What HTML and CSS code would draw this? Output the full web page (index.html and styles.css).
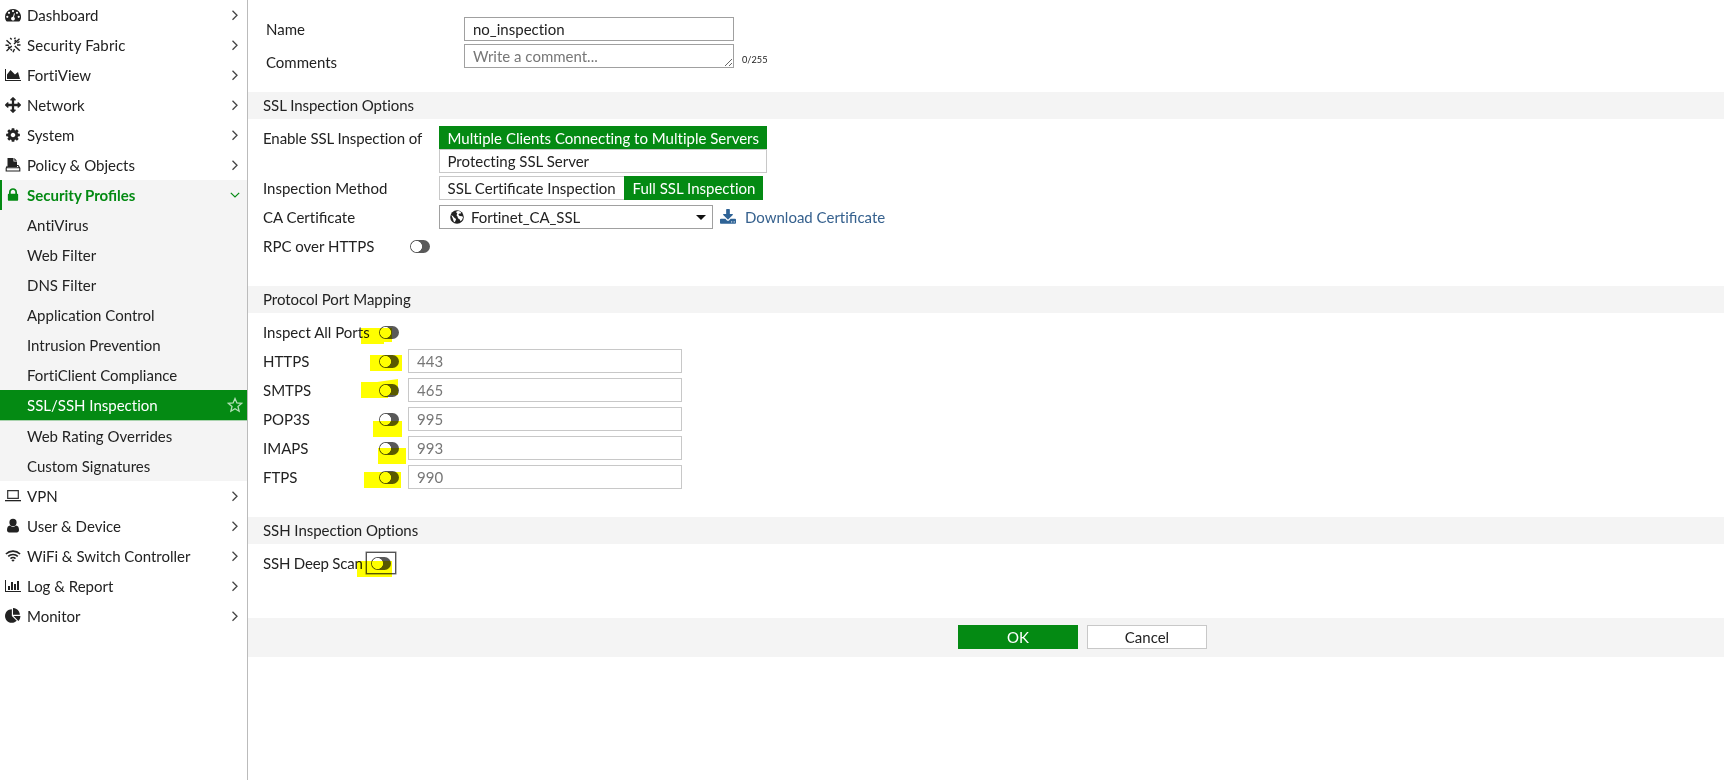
FILE: index.html
```html
<!DOCTYPE html>
<html lang="en">
<head>
<meta charset="utf-8">
<title>SSL/SSH Inspection</title>
<link rel="stylesheet" href="styles.css">
</head>
<body>
<svg class="defs" width="0" height="0">
  <symbol id="chev" viewBox="0 0 8 12"><path d="M1.500 1.700 6 6.200 1.500 10.700" fill="none" stroke="#444" stroke-width="1.300"/></symbol>
</svg>
<div class="app">
<nav class="sidebar">
  <div class="item"><svg class="ico" viewBox="0 0 16 14"><path fill-rule="evenodd" d="M8 .9a8 8 0 0 0-8 8c0 1.600.4 3 1.200 4.200.2.300.400.400.700.400h12.200c.3 0 .5-.1.700-.4A8 8 0 0 0 8 .9zM8 2a1.100 1.100 0 1 1 0 2.200A1.100 1.100 0 0 1 8 2zM4 3.700a1.100 1.100 0 1 1 0 2.200 1.100 1.100 0 0 1 0-2.200zm8 0a1.100 1.100 0 1 1 0 2.200 1.100 1.100 0 0 1 0-2.200zM2.300 7.700a1.100 1.100 0 1 1 0 2.200 1.100 1.100 0 0 1 0-2.200zm11.400 0a1.100 1.100 0 1 1 0 2.200 1.100 1.100 0 0 1 0-2.200zM9 5.200l.9.300-.9 3.600a1.900 1.900 0 1 1-1-.3z"/></svg><span>Dashboard</span><svg class="chev"><use href="#chev"/></svg></div>
  <div class="item fabric"><svg class="ico" viewBox="0 0 16 16"><g stroke="#222" stroke-width="1.400" fill="none"><path d="M1.500 3.200 5.800 7.300M9.800 9 14.800 13.700M14.500 1.800 9 7M6.800 9 1.500 14M5.200 1 6.700 2.500M9.500 4.500 11 3M12 8H15.500M.5 8.300H3.800M5.500 12 7 13.500M9.500 12 8 15.300M10.500 .6 9.300 2M12.300 5.800 14.500 4.500M3 10.800 4.500 9.500"/></g></svg><span>Security Fabric</span><svg class="chev"><use href="#chev"/></svg></div>
  <div class="item"><svg class="ico" viewBox="0 0 2048 1792"><path d="M2048 1536v128h-2048v-1536h128v1408h1920zm-384-1024l256 896h-1664v-576l448-576 576 576z"/></svg><span>FortiView</span><svg class="chev"><use href="#chev"/></svg></div>
  <div class="item"><svg class="ico" viewBox="0 0 1792 1792"><path d="M1792 896q0 26-19 45l-256 256q-19 19-45 19t-45-19-19-45v-128h-384v384h128q26 0 45 19t19 45-19 45l-256 256q-19 19-45 19t-45-19l-256-256q-19-19-19-45t19-45 45-19h128v-384h-384v128q0 26-19 45t-45 19-45-19l-256-256q-19-19-19-45t19-45l256-256q19-19 45-19t45 19 19 45v128h384v-384h-128q-26 0-45-19t-19-45 19-45l256-256q19-19 45-19t45 19l256 256q19 19 19 45t-19 45-45 19h-128v384h384v-128q0-26 19-45t45-19 45 19l256 256q19 19 19 45z"/></svg><span>Network</span><svg class="chev"><use href="#chev"/></svg></div>
  <div class="item"><svg class="ico" viewBox="0 0 1792 1792"><path d="M1152 896q0-106-75-181t-181-75-181 75-75 181 75 181 181 75 181-75 75-181zm512-109v222q0 12-8 23t-20 13l-185 28q-19 54-39 91 35 50 107 138 10 12 10 25t-9 23q-27 37-99 108t-94 71q-12 0-26-9l-138-108q-44 23-91 38-16 136-29 186-7 28-36 28h-222q-14 0-24.500-8.500t-11.500-21.500l-28-184q-49-16-90-37l-141 107q-10 9-25 9-14 0-25-11-126-114-165-168-7-10-7-23 0-12 8-23 15-21 51-66.500t54-70.500q-27-50-41-99l-183-27q-13-2-21-12.500t-8-23.500v-222q0-12 8-23t19-13l186-28q14-46 39-92-40-57-107-138-10-12-10-24 0-10 9-23 26-36 98.500-107.500t94.500-71.500q13 0 26 10l138 107q44-23 91-38 16-136 29-186 7-28 36-28h222q14 0 24.500 8.500t11.500 21.500l28 184q49 16 90 37l142-107q9-9 24-9 13 0 25 10 129 119 165 170 7 8 7 22 0 12-8 23-15 21-51 66.500t-54 70.500q26 50 41 98l183 28q13 2 21 12.500t8 23.500z"/></svg><span>System</span><svg class="chev"><use href="#chev"/></svg></div>
  <div class="item"><svg class="ico" viewBox="0 0 16 16"><path d="M2.500 1h6v3.500H12V10H2.500zM9.300 1 12 3.800H9.300z"/><path d="M2.300 9 1.200 11.200V14h13.600v-2.800L13.200 8.500H12M1.200 10.800H14.500" fill="none" stroke="#222" stroke-width="1.100"/></svg><span>Policy &amp; Objects</span><svg class="chev"><use href="#chev"/></svg></div>
  <div class="group">
    <div class="item open"><svg class="ico" viewBox="0 0 1792 1792"><path d="M640 768h512v-192q0-106-75-181t-181-75-181 75-75 181v192zm832 96v576q0 40-28 68t-68 28h-960q-40 0-68-28t-28-68v-576q0-40 28-68t68-28h32v-192q0-184 132-316t316-132 316 132 132 316v192h32q40 0 68 28t28 68z"/></svg><span>Security Profiles</span><svg class="down" viewBox="0 0 10 6"><path d="M.8.8 5 5 9.200.8" fill="none" stroke="#048a13" stroke-width="1.200"/></svg></div>
    <div class="item sub">AntiVirus</div>
    <div class="item sub">Web Filter</div>
    <div class="item sub">DNS Filter</div>
    <div class="item sub">Application Control</div>
    <div class="item sub">Intrusion Prevention</div>
    <div class="item sub">FortiClient Compliance</div>
    <div class="item sub current"><span>SSL/SSH Inspection</span><svg class="star" viewBox="0 0 16 16"><path d="M8 1.600 9.900 6l4.700.4-3.600 3.100 1.100 4.700L8 11.700l-4.100 2.500L5 9.500 1.400 6.400 6.100 6z" fill="none" stroke="#b4e0b8" stroke-width="1.300"/></svg></div>
    <div class="item sub">Web Rating Overrides</div>
    <div class="item sub">Custom Signatures</div>
  </div>
  <div class="item"><svg class="ico" viewBox="0 0 16 16"><path d="M2.700 2.700h10.600v7.600H2.700z" fill="none" stroke="#333" stroke-width="1.200"/><path d="M0 12h16v1.300H0z"/></svg><span>VPN</span><svg class="chev"><use href="#chev"/></svg></div>
  <div class="item"><svg class="ico" viewBox="0 0 16 16"><path d="M8 .8a3.600 3.600 0 1 1 0 7.200A3.600 3.600 0 0 1 8 .8zM5 7.500a4.600 4.600 0 0 0 6 0c2 .1 3 1.900 3 4.500 0 1.600-.9 2.500-2.200 2.500H4.200C2.900 14.500 2 13.600 2 12c0-2.600 1-4.400 3-4.500z"/></svg><span>User &amp; Device</span><svg class="chev"><use href="#chev"/></svg></div>
  <div class="item"><svg class="ico" viewBox="0 0 16 16"><path d="M.9 6a10.200 10.200 0 0 1 14.200 0M3.200 8.400a6.900 6.900 0 0 1 9.600 0M5.500 10.700a3.600 3.600 0 0 1 5 0" fill="none" stroke="#222" stroke-width="1.600"/><path d="M6.400 12.200a2.300 2.300 0 0 1 3.200 0L8 13.800z"/></svg><span>WiFi &amp; Switch Controller</span><svg class="chev"><use href="#chev"/></svg></div>
  <div class="item"><svg class="ico" viewBox="0 0 2048 1792"><path d="M640 896v512h-256v-512h256zm384-512v1024h-256v-1024h256zm1024 1152v128h-2048v-1536h128v1408h1920zm-640-896v768h-256v-768h256zm384-384v1152h-256v-1152h256z"/></svg><span>Log &amp; Report</span><svg class="chev"><use href="#chev"/></svg></div>
  <div class="item"><svg class="ico" viewBox="0 0 1792 1792"><path d="M768 890l546 546q-106 108-247.500 168t-298.500 60q-209 0-385.500-103t-279.500-279.500-103-385.500 103-385.500 279.500-279.500 385.500-103v762zm187 6h773q0 157-60 298.500t-168 247.500zm709-128h-768v-768q209 0 385.500 103t279.500 279.500 103 385.500z"/></svg><span>Monitor</span><svg class="chev"><use href="#chev"/></svg></div>
</nav>
<main class="main">
  <div class="top">
    <div class="field"><label>Name</label><input class="box" value="no_inspection"></div>
    <div class="field comments"><label>Comments</label><textarea class="box" rows="1" placeholder="Write a comment..."></textarea><span class="count">0/255</span></div>
  </div>

  <h2 class="bar">SSL Inspection Options</h2>
  <section class="ssl">
    <div class="row enable"><label>Enable SSL Inspection of</label>
      <div class="stack"><div class="opt on">Multiple Clients Connecting to Multiple Servers</div><div class="opt">Protecting SSL Server</div></div></div>
    <div class="row method"><label>Inspection Method</label>
      <div class="seg"><div class="opt">SSL Certi<b class="fi">fi</b>cate Inspection</div><div class="opt on">Full SSL Inspection</div></div></div>
    <div class="row ca"><label>CA Certi<b class="fi">fi</b>cate</label>
      <div class="select"><svg class="globe" viewBox="0 0 14 14"><circle cx="7" cy="7" r="6.800"/><path d="M6.600 1.200 9 1l2 1.300-.5 1.500-1.300-.4-.8 1.300L9.700 6l2.600.2.700 1-.9 2.600-1.600 1.500-.7-1.800L8 8.300 7.500 6.500l-1-1.300.8-1.600-1-.9zM1.300 5l1.500.9L4.600 8l1.500.9-.5 1.600-.8 1.700-1.200-1-.5-2z" fill="#fff"/></svg><span>Fortinet_CA_SSL</span><i class="caret"></i></div>
      <a class="dl"><svg viewBox="64 0 1664 1664"><path fill="#2f6396" d="M1344 1344q0-26-19-45t-45-19-45 19-19 45 19 45 45 19 45-19 19-45zm256 0q0-26-19-45t-45-19-45 19-19 45 19 45 45 19 45-19 19-45zm128-224v320q0 40-28 68t-68 28h-1472q-40 0-68-28t-28-68v-320q0-40 28-68t68-28h465l135 136q58 56 136 56t136-56l136-136h464q40 0 68 28t28 68zm-325-569q17 41-14 70l-448 448q-18 19-45 19t-45-19l-448-448q-31-29-14-70 17-39 59-39h256v-448q0-26 19-45t45-19h256q26 0 45 19t19 45v448h256q42 0 59 39z"/></svg><span>Download Certi<b class="fi">fi</b>cate</span></a></div>
    <div class="row rpc"><label>RPC over HTTPS</label><i class="toggle"></i></div>
  </section>

  <h2 class="bar">Protocol Port Mapping</h2>
  <section class="ports">
    <div class="row"><label>Inspect All Ports</label><i class="toggle"></i><i class="mark m1"></i></div>
    <div class="row"><label>HTTPS</label><i class="toggle"></i><input class="port" placeholder="443"><i class="mark m2"></i></div>
    <div class="row"><label>SMTPS</label><i class="toggle"></i><input class="port" placeholder="465"><i class="mark m3"></i></div>
    <div class="row"><label>POP3S</label><i class="toggle"></i><input class="port" placeholder="995"><i class="mark m4"></i></div>
    <div class="row"><label>IMAPS</label><i class="toggle"></i><input class="port" placeholder="993"><i class="mark m5"></i></div>
    <div class="row"><label>FTPS</label><i class="toggle"></i><input class="port" placeholder="990"><i class="mark m6"></i></div>
  </section>

  <h2 class="bar">SSH Inspection Options</h2>
  <section class="ssh">
    <div class="row"><label>SSH Deep Scan</label><span class="focus"><i class="toggle"></i></span><i class="mark m7"></i></div>
  </section>

  <footer class="footer"><button class="btn ok">OK</button><button class="btn">Cancel</button></footer>
</main>
</div>
</body>
</html>
```

FILE: styles.css
```css
* { box-sizing: border-box; }
body { margin: 0; background: #fff; color: #222; font: 15px/20px Lato, "Open Sans", sans-serif; font-variant-ligatures: none; overflow: hidden; }
input, textarea, button { font: inherit; font-variant-ligatures: none; color: inherit; margin: 0; border-radius: 0; outline: 0; }
.defs { position: absolute; }
.fi { font-weight: inherit; font-variant-ligatures: normal; }
.app { display: flex; height: 780px; }

.sidebar { width: 248px; flex: none; border-right: 1px solid #bbb; }
.item { display: flex; align-items: center; height: 30px; padding: 0 8px 0 5px; white-space: nowrap; }
.item span { margin-top: -1px; }
.ico { width: 16px; height: 16px; margin-right: 6px; fill: #222; flex: none; }
.fabric span { letter-spacing: .12px; }
.chev { width: 8px; height: 12px; margin-left: auto; }
.group { background: #f4f4f4; }
.open { border-left: 2px solid #048a13; padding-left: 3px; color: #048a13; font-weight: 700; }
.open span { font-variant-ligatures: normal; letter-spacing: normal; }
.open .ico { fill: #048a13; }
.down { width: 10px; height: 6px; margin-left: auto; margin-right: -1px; }
.sub { padding: 0 9px 1px 27px; }
.current { height: 31px; background: #048a13; color: #fff; padding: 0 4px 0 27px; border-bottom: 1px solid #a9d3ad; }
.star { width: 16px; height: 16px; margin-left: auto; }

.main { flex: 1; min-width: 0; }
.top { height: 92px; padding: 17px 0 0 18px; }
.field { display: flex; height: 27px; }
.field label { width: 198px; line-height: 24px; }
.comments label { line-height: 36px; }
.box { display: block; width: 270px; height: 24px; border: 1px solid #a0a0a0; padding: 1px 8px; line-height: 20px; background: #fff; }
textarea.box { overflow: hidden; }
::placeholder { color: #777; opacity: 1; }
.count { font-size: 9.200px; margin: 6px 0 0 8px; }

.bar { margin: 0; height: 27px; padding-left: 15px; background: #f4f4f4; font-size: 15px; font-weight: 400; line-height: 26px; letter-spacing: -.05px; }
.row { display: flex; position: relative; }
.row label { flex: none; white-space: nowrap; line-height: 24px; }
.ssl { height: 167px; padding: 7px 0 0 15px; }
.ssl label { width: 176px; }
.enable { height: 50px; }
.enable label { letter-spacing: -.08px; }
.method, .ca { height: 29px; }
.stack { width: 328px; }
.opt { height: 24px; border: 1px solid #c8c8c8; background: #fff; padding: 0 7px 0 7.500px; line-height: 23px; white-space: nowrap; }
.opt.on { border-color: #048a13; background: #048a13; color: #fff; }
.stack .on { height: 23px; }
.seg { display: flex; }
.seg .opt { width: 185px; border-right: 0; }
.seg .opt.on { width: 139px; }
.select { display: flex; align-items: center; width: 274px; height: 24px; border: 1px solid #a0a0a0; padding: 0 6px 0 10px; letter-spacing: -.08px; }
.globe { width: 14px; height: 14px; margin: -1px 7px 0 0; fill: #222; }
.caret { margin-left: auto; border: 5px solid transparent; border-top-color: #111; border-bottom: 0; }
.dl { display: flex; align-items: center; height: 24px; margin-left: 7px; color: #36618e; }
.dl svg { width: 16px; height: 16px; margin-right: 9px; }
.rpc label { width: 147px; }

.toggle { display: block; flex: none; width: 20px; height: 13px; margin-top: 6px; border-radius: 7px; background: radial-gradient(circle at 6.500px 6.500px, #fff 5.200px, #595959 5.800px); }
.ports { height: 204px; padding: 7px 0 0 15px; }
.ports .row { height: 29px; }
.ports label { width: 116px; }
.port { width: 274px; height: 24px; margin-left: 9px; border: 1px solid #c8c8c8; padding: 0 8px; background: #fff; }

/* highlighter strokes laid over the switches */
.mark { position: absolute; background: #ff0; mix-blend-mode: multiply; height: 16px; }
.m1 { left: 98px; top: 8px; width: 31px; clip-path: polygon(0 0, 100% 0, 100% 14px, 23px 14px, 23px 100%, 0 100%); }
.m2 { left: 107px; top: 6px; width: 32px; }
.m3 { left: 98px; top: 1px; width: 37px; height: 19px; clip-path: polygon(0 3px, 16px 3px, 100% 0, 100% 16px, 27px 16px, 27px 100%, 0 100%); }
.m4 { left: 110px; top: 14px; width: 29px; }
.m5 { left: 115px; top: 12px; width: 28px; }
.m6 { left: 101px; top: 7px; width: 37px; }
.m7 { left: 94px; top: 9px; width: 35px; }

.ssh { height: 74px; padding: 8px 0 0 15px; }
.ssh label { width: 103px; line-height: 22px; letter-spacing: -.18px; }
.focus { width: 30px; height: 22px; border: 1px solid #555; padding-left: 4px; box-shadow: 0 0 0 .5px #777; }
.focus .toggle { margin-top: 4px; }

.footer { display: flex; justify-content: center; gap: 9px; height: 39px; padding: 7px 0 0 193px; background: #f4f4f4; }
.btn { width: 120px; height: 24px; border: 1px solid #c8c8c8; background: #fff; padding: 0; line-height: 20px; }
.ok { border-color: #048a13; background: #048a13; color: #fff; }
```
